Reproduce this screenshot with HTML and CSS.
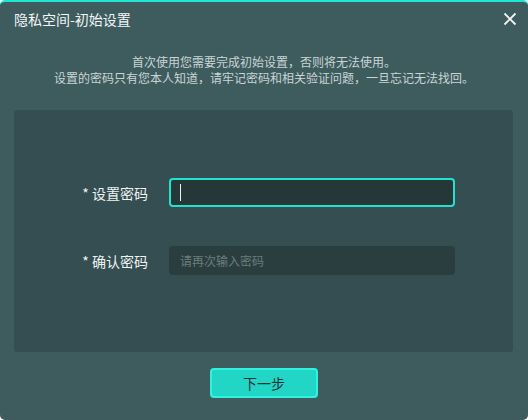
FILE: index.html
```html
<!DOCTYPE html>
<html lang="zh-CN">
<head>
<meta charset="utf-8">
<title>隐私空间-初始设置</title>
<link rel="stylesheet" href="styles.css">
</head>
<body>
<div class="window">
  <div class="titlebar">
    <span class="title">隐私空间-初始设置</span>
    <span class="close">
      <svg width="14" height="14" viewBox="0 0 14 14"><path d="M1.5 1.5 L12.5 12.5 M12.5 1.5 L1.5 12.5" stroke="#f2f5f5" stroke-width="1.8" fill="none"/></svg>
    </span>
  </div>
  <div class="desc">
    <p>首次使用您需要完成初始设置，否则将无法使用。</p>
    <p>设置的密码只有您本人知道，请牢记密码和相关验证问题，一旦忘记无法找回。</p>
  </div>
  <div class="panel">
    <div class="form">
      <label class="label">* 设置密码</label>
      <div class="field active"><span class="caret"></span></div>
      <label class="label">* 确认密码</label>
      <div class="field"><span class="placeholder">请再次输入密码</span></div>
    </div>
  </div>
  <div class="footer">
    <button class="btn">下一步</button>
  </div>
</div>
</body>
</html>
```

FILE: styles.css
```css
html, body {
  margin: 0;
  padding: 0;
  background: #ffffff;
}
body {
  font-family: "Noto Sans CJK SC", "Noto Sans", sans-serif;
}
.window {
  width: 528px;
  height: 420px;
  box-sizing: border-box;
  background: #3e5c5e;
  border-top: 2px solid #1fe6d6;
  border-radius: 5px;
  display: flex;
  flex-direction: column;
  overflow: hidden;
}
.titlebar {
  height: 34px;
  display: flex;
  align-items: center;
  justify-content: space-between;
  padding: 0 11px 0 14px;
}
.title {
  color: #f2f6f6;
  font-size: 14px;
  line-height: 20px;
}
.close {
  display: flex;
  width: 14px;
  height: 14px;
}
.desc {
  margin-top: 18px;
  text-align: center;
  color: #c9d5d5;
  font-size: 12px;
  line-height: 16px;
}
.desc p {
  margin: 0;
}
.panel {
  margin: 24px 15px 0 14px;
  height: 242px;
  background: #354e51;
  border-radius: 3px;
  box-sizing: border-box;
  padding-top: 68px;
}
.form {
  display: grid;
  grid-template-columns: 134px 286px;
  column-gap: 21px;
  row-gap: 39px;
  align-items: center;
}
.label {
  text-align: right;
  color: #eef3f3;
  font-size: 14px;
  line-height: 20px;
}
.field {
  height: 29px;
  box-sizing: border-box;
  background: #2b3e3f;
  border-radius: 4px;
  display: flex;
  align-items: center;
  padding-left: 11px;
}
.field.active {
  background: #263737;
  border: 2px solid #22e3d3;
  padding-left: 9px;
}
.caret {
  width: 1px;
  height: 17px;
  background: #f0f0f0;
}
.placeholder {
  color: #6b7d7d;
  font-size: 12px;
  line-height: 16px;
}
.footer {
  display: flex;
  justify-content: center;
  padding-top: 16px;
}
.btn {
  width: 108px;
  height: 30px;
  box-sizing: border-box;
  background: #22d6c6;
  border: 2px solid #2ff2e2;
  border-radius: 4px;
  color: #1b3232;
  font-family: "Noto Sans CJK SC", "Noto Sans", sans-serif;
  font-size: 14px;
  line-height: 20px;
  padding: 0;
}
```
